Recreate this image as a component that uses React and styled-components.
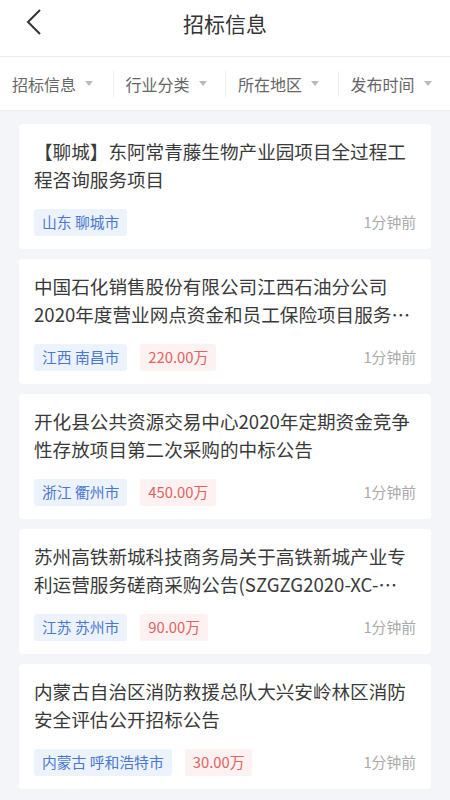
import React from "react";
import styled, { createGlobalStyle } from "styled-components";

const items = [
  {
    title: "【聊城】东阿常青藤生物产业园项目全过程工程咨询服务项目",
    region: "山东 聊城市",
    time: "1分钟前",
  },
  {
    title: "中国石化销售股份有限公司江西石油分公司2020年度营业网点资金和员工保险项目服务采购公告",
    region: "江西 南昌市",
    price: "220.00万",
    time: "1分钟前",
  },
  {
    title: "开化县公共资源交易中心2020年定期资金竞争性存放项目第二次采购的中标公告",
    region: "浙江 衢州市",
    price: "450.00万",
    time: "1分钟前",
  },
  {
    title: "苏州高铁新城科技商务局关于高铁新城产业专利运营服务磋商采购公告(SZGZG2020-XC-GK001)",
    region: "江苏 苏州市",
    price: "90.00万",
    time: "1分钟前",
  },
  {
    title: "内蒙古自治区消防救援总队大兴安岭林区消防安全评估公开招标公告",
    region: "内蒙古 呼和浩特市",
    price: "30.00万",
    time: "1分钟前",
  },
];

const filters = ["招标信息", "行业分类", "所在地区", "发布时间"];

function App() {
  return (
    <Page>
      <GlobalStyle />
      <Header>
        <Back aria-label="back">
          <svg width="18" height="28" viewBox="0 0 18 28">
            <path d="M15 2 L3 14 L15 26" fill="none" stroke="#333" strokeWidth="2" />
          </svg>
        </Back>
        <Title>招标信息</Title>
      </Header>

      <FilterBar>
        {filters.map((f, i) => (
          <Filter key={f} $first={i === 0}>
            {f}
            <Caret />
          </Filter>
        ))}
      </FilterBar>

      <List>
        {items.map((it, i) => (
          <Card key={i}>
            <CardTitle>{it.title}</CardTitle>
            <Meta>
              <Tag $kind="region">{it.region}</Tag>
              {it.price && <Tag $kind="price">{it.price}</Tag>}
              <Time>{it.time}</Time>
            </Meta>
          </Card>
        ))}
      </List>
    </Page>
  );
}

const GlobalStyle = createGlobalStyle`
  html, body {
    margin: 0;
    padding: 0;
    background: #f4f5f9;
  }
  body {
    font-family: "Noto Sans CJK SC", "Noto Sans", sans-serif;
  }
`;

const Page = styled.div`
  width: 450px;
  min-height: 800px;
  background: #f4f5f9;
  overflow: hidden;
`;

const Header = styled.div`
  height: 56px;
  background: #fff;
  display: flex;
  align-items: center;
  justify-content: center;
  position: relative;
`;

const Back = styled.div`
  position: absolute;
  left: 25px;
  top: 8px;
  width: 18px;
  height: 28px;
  display: flex;
`;

const Title = styled.div`
  font-size: 21px;
  color: #333;
  line-height: 1;
  margin-top: -10px;
`;

const FilterBar = styled.div`
  height: 53px;
  background: #fff;
  border-top: 1px solid #ececec;
  border-bottom: 1px solid #eeeeee;
  display: grid;
  grid-template-columns: repeat(4, 1fr);
  align-items: center;
`;

const Filter = styled.div`
  display: flex;
  align-items: center;
  padding-left: 12px;
  height: 26px;
  font-size: 16px;
  color: #666;
  border-left: ${(p) => (p.$first ? "none" : "1px solid #eeeeee")};
`;

const Caret = styled.span`
  width: 0;
  height: 0;
  margin-left: 9px;
  border-left: 4.5px solid transparent;
  border-right: 4.5px solid transparent;
  border-top: 5px solid #bbb;
`;

const List = styled.div`
  display: flex;
  flex-direction: column;
  gap: 10px;
  padding: 13px 19px 0;
`;

const Card = styled.div`
  background: #fff;
  border-radius: 4px;
  height: 125px;
  box-sizing: border-box;
  padding: 13px 15px 0;
`;

const CardTitle = styled.div`
  font-size: 18.6px;
  line-height: 28px;
  height: 56px;
  color: #3a3a3a;
  display: -webkit-box;
  -webkit-line-clamp: 2;
  -webkit-box-orient: vertical;
  overflow: hidden;
  word-break: normal;
  overflow-wrap: normal;
`;

const Meta = styled.div`
  display: flex;
  align-items: center;
  margin-top: 16px;
`;

const Tag = styled.span`
  display: inline-flex;
  align-items: center;
  height: 27px;
  padding: 0 8px;
  font-size: 14.8px;
  line-height: 1;
  border-radius: 3px;
  margin-right: 13px;
  background: ${(p) => (p.$kind === "price" ? "#fdf1f1" : "#edf3fd")};
  color: ${(p) => (p.$kind === "price" ? "#df6363" : "#4a78d1")};
`;

const Time = styled.span`
  margin-left: auto;
  font-size: 14.8px;
  line-height: 1;
  color: #aaa;
`;

export default App;
